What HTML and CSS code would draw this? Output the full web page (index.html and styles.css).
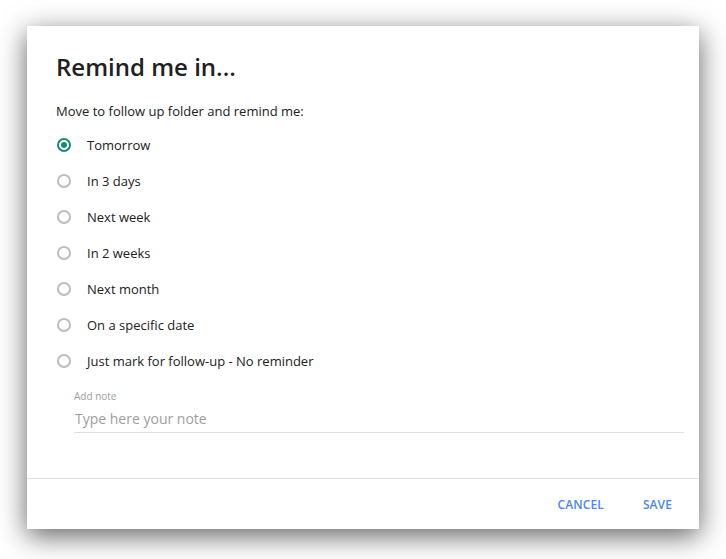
FILE: index.html
```html
<!DOCTYPE html>
<html>
<head>
<meta charset="utf-8">
<link rel="stylesheet" href="styles.css">
</head>
<body>
<div class="dialog">
  <div class="content">
    <h1 class="title">Remind me in...</h1>
    <p class="subtitle">Move to follow up folder and remind me:</p>
    <ul class="options">
      <li class="option"><span class="radio checked"></span><span>Tomorrow</span></li>
      <li class="option"><span class="radio"></span><span>In 3 days</span></li>
      <li class="option"><span class="radio"></span><span>Next week</span></li>
      <li class="option"><span class="radio"></span><span>In 2 weeks</span></li>
      <li class="option"><span class="radio"></span><span>Next month</span></li>
      <li class="option"><span class="radio"></span><span>On a specific date</span></li>
      <li class="option"><span class="radio"></span><span>Just mark for follow-up - No reminder</span></li>
    </ul>
    <div class="field">
      <label class="field-label">Add note</label>
      <div class="field-input">Type here your note</div>
    </div>
  </div>
  <div class="footer">
    <button class="btn">CANCEL</button>
    <button class="btn">SAVE</button>
  </div>
</div>
</body>
</html>
```
FILE: styles.css
```css
html, body {
  margin: 0;
  padding: 0;
  background: #ffffff;
}
body {
  box-sizing: border-box;
  min-height: 559px;
  font-family: "Open Sans", "Noto Sans", sans-serif;
  color: #212121;
  padding: 26px 0 0 27px;
}
.dialog {
  width: 672px;
  height: 503px;
  background: #ffffff;
  box-shadow: 0 7px 26px rgba(0, 0, 0, 0.62);
  display: flex;
  flex-direction: column;
}
.content {
  flex: 1;
  padding: 24px 15px 0 29px;
}
.title {
  margin: 0;
  font-size: 24px;
  font-weight: 600;
  line-height: 34px;
  color: #212121;
}
.subtitle {
  margin: 18px 0 0 0;
  font-size: 13px;
  line-height: 18px;
  color: #212121;
}
.options {
  list-style: none;
  margin: 7px 0 0 0;
  padding: 0;
}
.option {
  display: flex;
  align-items: center;
  height: 36px;
  font-size: 13px;
  color: #212121;
}
.radio {
  box-sizing: border-box;
  width: 14px;
  height: 14px;
  border: 2px solid #bdbdbd;
  border-radius: 50%;
  margin: 0 16px 0 1px;
  flex: none;
  display: flex;
  align-items: center;
  justify-content: center;
}
.radio.checked {
  border-color: #1a8a73;
}
.radio.checked::after {
  content: "";
  width: 6px;
  height: 6px;
  border-radius: 50%;
  background: #1a8a73;
}
.field {
  margin: 10px 0 0 18px;
  border-bottom: 1px solid #e0e0e0;
  padding-bottom: 2px;
}
.field-label {
  display: block;
  font-size: 10px;
  line-height: 14px;
  color: #9e9e9e;
}
.field-input {
  margin-top: 5px;
  font-size: 14px;
  line-height: 22px;
  color: #9e9e9e;
  padding-left: 1px;
}
.footer {
  height: 49px;
  border-top: 1px solid #e0e0e0;
  display: flex;
  justify-content: flex-end;
  align-items: center;
  padding-right: 27px;
  padding-top: 1px;
  gap: 39px;
}
.btn {
  background: none;
  border: none;
  padding: 0;
  font-family: "Open Sans", "Noto Sans", sans-serif;
  font-size: 12px;
  font-weight: 600;
  letter-spacing: 0.1px;
  color: #4a87f0;
  cursor: pointer;
}
```
